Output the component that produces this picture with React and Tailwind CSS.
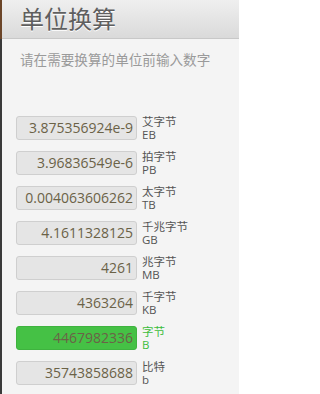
import React from 'react'

const ROWS = [
  { value: '3.875356924e-9', cn: '艾字节', en: 'EB' },
  { value: '3.96836549e-6', cn: '拍字节', en: 'PB' },
  { value: '0.004063606262', cn: '太字节', en: 'TB' },
  { value: '4.1611328125', cn: '千兆字节', en: 'GB' },
  { value: '4261', cn: '兆字节', en: 'MB' },
  { value: '4363264', cn: '千字节', en: 'KB' },
  { value: '4467982336', cn: '字节', en: 'B', active: true },
  { value: '35743858688', cn: '比特', en: 'b' },
]

const font = { fontFamily: '"Open Sans", "Noto Sans CJK SC", sans-serif' }

export default function App() {
  return (
    <div className="w-[239px] h-[394px] flex overflow-hidden bg-[#f4f4f4]" style={font}>
      {/* left edge strip */}
      <div className="w-[2px] shrink-0 flex flex-col">
        <div className="h-[39px] bg-[#6b4528]" />
        <div className="flex-1 bg-[#3a3a3a]" />
      </div>

      <div className="flex-1 flex flex-col">
        <div className="h-[39px] shrink-0 border-b border-[#c8c8c8] bg-gradient-to-b from-[#efefef] to-[#dadada] flex items-center pl-[18px]">
          <h1 className="text-[24px] leading-none text-[#5f5f5f] [text-shadow:0_1px_0_#fff]">单位换算</h1>
        </div>

        <p className="mt-[13px] pl-[18px] text-[13.6px] leading-[16px] text-[#9a9a9a]">请在需要换算的单位前输入数字</p>

        <div className="mt-[48px] pl-[14px] flex flex-col gap-[11px]">
          {ROWS.map((r) => (
            <div key={r.en} className="flex items-start h-[24px]">
              <div
                className={`w-[121px] h-[24px] shrink-0 rounded-[3px] border flex items-center justify-end pr-[3px] text-[14px] leading-none text-[#6b6247] ${
                  r.active ? 'bg-[#45c145] border-[#3fb33f]' : 'bg-[#e5e5e5] border-[#cfcfcf]'
                }`}
              >
                {r.value}
              </div>
              <div className={`ml-[5px] -mt-[1px] flex flex-col text-[11.5px] leading-[13px] ${r.active ? 'text-[#3dbd3d]' : 'text-[#555]'}`}>
                <span>{r.cn}</span>
                <span>{r.en}</span>
              </div>
            </div>
          ))}
        </div>
      </div>
    </div>
  )
}
